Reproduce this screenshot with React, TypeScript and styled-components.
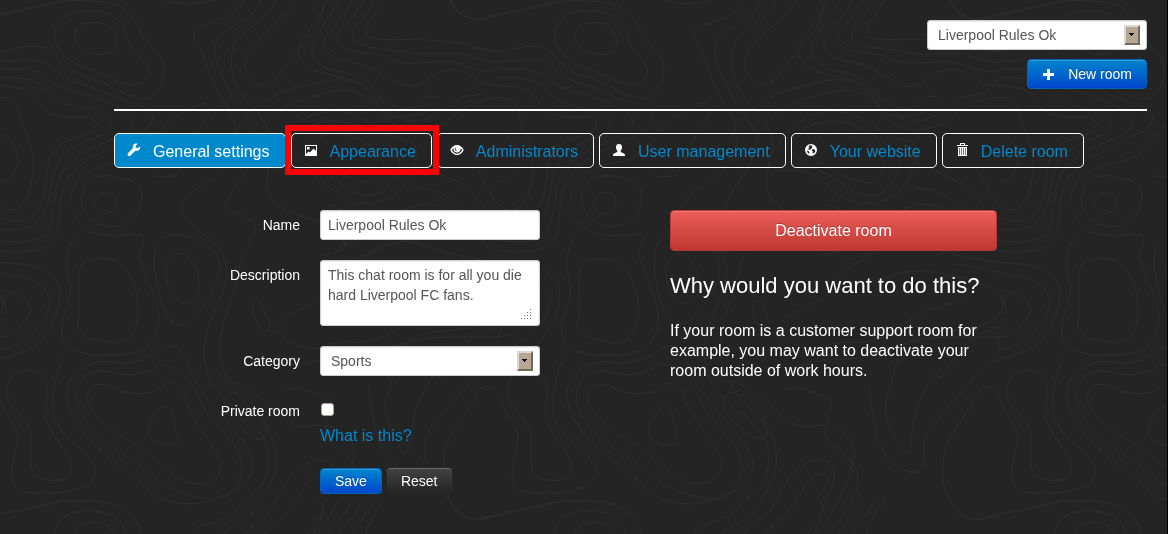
import React from "react";
import styled, { createGlobalStyle, css } from "styled-components";

const GlobalStyle = createGlobalStyle`
  *, *::before, *::after { box-sizing: border-box; }
  html { min-height: 100%; background: #242424; }
  body {
    margin: 0;
    color: #fff;
    font-family: "Liberation Sans", Arial, sans-serif;
    font-size: 16px;
    line-height: 20px;
  }
  button, input, select, textarea { font-family: inherit; }
`;

/* ---------- Topographic backdrop ---------- */

const Backdrop = styled.svg`
  position: fixed;
  inset: 0;
  z-index: -1;
  width: 100%;
  height: 100%;

  path { vector-effect: non-scaling-stroke; }
`;

const TILE_W = 1342;
const TILE_H = 1468;

const contours = [
  "M200 110C200 80 225 65 255 66C290 66 312 90 313 120C314 150 295 162 270 160C235 158 200 140 200 110Z",
  "M147 100C150 50 190 28 250 32C320 36 335 80 345 120C360 160 400 180 397 215C390 255 350 255 310 235C260 205 210 200 175 165C155 145 145 125 147 100Z",
  "M1210 0C1225 50 1270 70 1320 50C1380 30 1440 25 1500 5",
  "M265 5C340 10 370 60 380 100C400 140 440 160 440 200C440 250 420 285 390 290C350 290 310 260 270 240C220 220 190 215 165 185C140 150 120 135 90 135C50 135 30 150 0 150C-60 150 -80 120 -142 120",
  "M0 182C50 175 100 170 130 190C160 220 190 240 230 250C270 262 310 290 350 300C400 310 420 335 405 365C390 395 340 400 300 430C250 460 200 480 175 540C150 600 170 680 140 710C110 745 40 740 0 738",
  "M0 203C60 200 90 200 120 225C150 260 200 265 240 280C290 300 330 315 350 340C375 370 330 400 290 415C240 440 190 460 165 510C140 570 150 650 120 690C80 720 30 710 0 705",
  "M0 228C50 225 90 230 115 255C140 290 180 310 240 320C300 330 310 375 280 395C230 415 180 430 155 480C130 530 140 600 110 640C90 670 40 680 0 672",
  "M0 250C50 255 80 260 105 300C120 340 160 345 220 342C270 345 270 380 230 395C180 410 140 430 130 480C120 540 120 600 90 630C60 655 30 650 0 640",
  "M0 287C30 285 45 300 50 330C55 370 80 400 85 440C95 480 85 560 70 590C50 620 25 625 0 605C-30 570 -40 530 -60 500",
  "M0 392C30 400 45 430 48 460C50 500 30 530 0 535",
  "M252 595C252 575 265 564 283 565C300 566 312 578 311 596C310 615 300 628 280 627C263 625 252 612 252 595Z",
  "M218 580C222 540 250 515 290 515C330 522 375 530 380 560C385 610 360 660 310 665C260 668 215 630 218 580Z",
  "M190 600C180 540 240 490 300 480C350 475 400 440 420 400C440 360 500 320 545 303C575 310 560 350 535 380C510 420 500 480 470 515C440 520 420 520 412 515",
  "M200 630C210 680 280 700 340 690C400 680 390 710 370 740C380 790 420 870 425 920C430 990 400 1030 340 1040C270 1050 190 1040 170 1000C150 950 190 900 190 850C180 800 170 740 200 700",
  "M445 790C445 755 470 740 490 745C520 755 535 800 535 840C530 880 500 900 480 885C455 870 445 830 445 790Z",
  "M415 740C420 700 450 685 490 692C540 705 590 730 590 790C585 850 550 890 530 920C500 960 470 965 450 930C425 880 410 800 415 740Z",
  "M215 790C220 755 270 755 310 765C350 790 370 850 370 900C375 960 350 1005 310 1008C260 1000 205 990 208 950C220 900 205 840 215 790Z",
  "M650 5C640 40 600 55 545 75C500 95 530 120 545 160C560 210 575 260 600 300C635 350 640 400 630 450C610 510 540 540 500 580C470 620 500 650 550 690C600 730 620 780 600 850C580 910 540 980 550 1060C560 1160 640 1200 690 1260C740 1310 720 1400 700 1430C680 1450 665 1460 650 1473",
  "M700 5C680 50 640 65 600 95C560 130 580 190 600 230C620 290 670 350 690 400C690 470 640 530 610 590C590 620 640 620 680 650C700 690 650 730 640 800C630 870 590 940 590 1020C590 1110 640 1170 700 1230C750 1290 750 1370 730 1410C720 1440 710 1455 700 1473",
  "M740 5C720 50 680 70 640 110C610 150 620 220 640 260C670 310 740 370 730 440C720 490 700 560 740 600C790 640 880 640 920 700C940 740 900 740 860 750",
  "M790 10C760 60 720 80 680 130C650 170 650 210 680 240C720 270 740 230 770 190C790 150 850 100 860 60C870 30 870 10 850 -5",
  "M445 0C490 20 540 10 570 0",
  "M910 0C880 60 850 90 840 130C830 170 850 190 890 205C950 215 980 230 1010 270C1040 310 1090 330 1110 310C1140 290 1150 270 1180 290",
  "M875 0C860 70 800 110 800 160C820 210 880 220 930 230C980 240 1000 290 1030 330C1080 360 1130 330 1170 320",
  "M945 0C920 60 880 90 870 120C865 150 890 170 930 180C1000 190 1040 230 1080 250C1130 270 1160 200 1220 205C1270 210 1290 260 1342 250",
  "M975 0C950 60 900 90 905 120C925 160 980 150 1040 165C1080 200 1140 180 1200 180C1250 185 1300 225 1342 203",
  "M1005 0C980 60 930 90 950 120C990 150 1050 140 1100 155C1150 165 1200 150 1250 160C1290 175 1310 185 1342 182",
  "M1030 0C1000 60 970 90 990 110C1040 125 1090 110 1150 118C1220 120 1250 130 1290 145C1310 150 1330 150 1342 150",
  "M640 370C680 300 760 260 830 250C890 225 960 230 990 260C1040 310 1060 360 1120 355C1190 350 1210 280 1270 280C1310 280 1320 240 1342 228",
  "M700 380C740 320 810 290 870 275C950 245 1000 285 1030 340C1080 390 1130 390 1190 365C1230 320 1270 300 1310 290C1320 288 1330 287 1342 287",
  "M720 480C750 390 810 330 900 325C980 330 1010 390 1080 410C1140 420 1120 470 1090 540C1060 590 990 610 940 590C890 570 870 520 810 500C770 500 740 510 720 480Z",
  "M780 440C790 380 850 350 910 355C980 365 1010 410 1050 430C1090 460 1070 520 1030 560C990 590 950 570 920 540C880 500 800 490 780 440Z",
  "M830 430C850 390 900 385 940 400C980 410 1020 440 1030 480C1030 520 1000 550 960 530C910 510 830 480 830 430Z",
  "M680 890C690 875 705 890 708 910C715 930 730 950 722 968C710 980 695 960 688 940C680 925 675 905 680 890Z",
  "M400 1250C405 1220 430 1190 450 1193C470 1215 465 1260 480 1295C470 1315 420 1310 405 1285C397 1275 397 1262 400 1250Z",
  "M235 1170C235 1130 270 1120 300 1135C350 1165 400 1165 440 1130C480 1110 490 1140 500 1180C520 1240 570 1300 595 1350C600 1400 560 1425 520 1420C450 1400 430 1350 370 1310C310 1270 235 1220 235 1170Z",
  "M205 1160C205 1100 250 1080 310 1095C360 1110 400 1090 430 1070C480 1070 520 1130 540 1180C570 1250 640 1290 650 1370C650 1420 620 1460 560 1465C480 1455 430 1420 380 1370C320 1320 205 1260 205 1160Z",
  "M445 1468C410 1455 380 1420 360 1400C300 1350 180 1260 180 1160C180 1090 240 1050 310 1065C360 1070 400 1050 440 1020C480 1000 500 1050 520 1110C560 1200 660 1270 680 1360C680 1410 620 1460 570 1468",
  "M30 1110C50 1080 90 1080 120 1110C140 1150 110 1200 130 1250C160 1310 200 1340 190 1390C170 1420 110 1415 90 1390C70 1340 100 1290 70 1240C30 1190 0 1160 30 1110Z",
  "M0 770C60 775 150 780 160 850C160 910 140 970 100 1010C60 1040 30 1045 0 1055",
  "M0 800C60 810 120 820 135 880C130 940 90 980 50 1005C30 1020 10 1025 0 1030",
  "M0 850C50 860 85 880 80 920C60 960 30 985 0 990",
  "M0 870C20 890 20 910 0 920",
  "M0 1170C10 1220 60 1250 45 1310C30 1370 20 1440 70 1445C140 1450 230 1450 255 1400C270 1340 180 1300 150 1240C130 1190 150 1100 170 1050",
  "M0 1508C60 1500 110 1480 170 1471C200 1468 230 1470 265 1473",
  "M640 1215C650 1205 662 1215 666 1230C660 1245 645 1235 640 1215Z",
  "M603 1170C610 1140 650 1150 680 1190C710 1220 730 1270 705 1290C670 1290 640 1250 620 1230C605 1210 600 1190 603 1170Z",
  "M580 1130C600 1100 660 1130 700 1170C750 1200 780 1270 840 1250C900 1240 960 1280 950 1340C945 1390 925 1430 910 1468",
  "M765 1150C790 1120 850 1160 890 1170C890 1220 860 1250 880 1290C910 1330 960 1350 960 1400C965 1430 955 1450 945 1468",
  "M790 1478C810 1440 830 1400 860 1390C895 1390 880 1435 850 1463",
  "M740 1473C760 1420 790 1370 850 1350C920 1350 900 1420 875 1468",
  "M745 960C780 900 870 900 900 830C920 780 1000 760 1020 720",
  "M900 750C910 710 960 700 1010 690C1060 680 1080 630 1150 620C1220 620 1250 680 1300 710C1320 730 1330 735 1342 738",
  "M930 760C990 760 1020 720 1070 710C1120 700 1170 740 1230 750C1270 760 1310 765 1342 770",
  "M1015 830C1100 770 1220 800 1330 850C1375 890 1340 950 1270 960C1200 980 1160 960 1100 1000C1060 1040 1060 1100 1040 1160C1020 1220 1060 1290 1085 1330C1115 1320 1100 1240 1120 1190C1150 1120 1170 1080 1180 1110",
  "M1342 1055C1290 1070 1285 1100 1230 1160C1190 1220 1130 1260 1140 1330C1140 1390 1110 1400 1070 1370C1000 1330 1000 1200 990 1130",
  "M1342 1030C1320 950 1380 950 1310 970C1240 1000 1220 1060 1180 1110",
  "M1225 775C1270 785 1310 790 1342 800",
  "M745 970C760 1000 830 1040 880 1015C930 990 960 1020 1030 990C1090 960 1120 910 1180 900C1220 890 1240 880 1250 850",
  "M800 1080C840 1050 900 1060 960 1050C1020 1040 1090 990 1200 990C1270 990 1310 990 1342 990",
  "M1342 1170C1310 1110 1290 1130 1270 1180C1240 1240 1190 1290 1190 1360C1180 1450 1220 1515 1280 1525C1300 1520 1320 1515 1342 1508",
  "M1140 480C1180 520 1250 530 1280 580C1300 620 1320 635 1342 640",
  "M1110 560C1140 540 1200 570 1240 610C1280 660 1310 665 1342 672",
  "M880 600C930 620 970 650 1030 640C1080 620 1130 580 1190 610C1240 640 1290 695 1342 705",
];

const Topography = () => (
  <Backdrop aria-hidden="true">
    <defs>
      <g id="contours" fill="none" stroke="#2c2c2c" strokeWidth="1">
        {contours.map((d) => (
          <path key={d} d={d} />
        ))}
      </g>
      <pattern id="topo" width="500" height="500" patternUnits="userSpaceOnUse">
        <rect width="500" height="500" fill="#242424" />
        <g transform="scale(0.3725 0.3406)">
          <use href="#contours" />
          <use href="#contours" x={-TILE_W} />
          <use href="#contours" x={TILE_W} />
          <use href="#contours" y={-TILE_H} />
          <use href="#contours" x={-TILE_W} y={-TILE_H} />
        </g>
      </pattern>
    </defs>
    <rect width="100%" height="100%" fill="url(#topo)" />
  </Backdrop>
);

/* ---------- Icons ---------- */

const Glyph = styled.svg`
  flex: none;
  width: 14px;
  height: 14px;
  fill: #fff;
`;

const WrenchIcon = () => (
  <Glyph viewBox="0 0 14 14">
    <path d="M13 3.2 10.8 5.2 9 4.6 8.6 3 10.7.7C9.2.1 7.4.5 6.5 1.7 5.7 2.7 5.6 3.8 6 5L1.2 9.9C.4 10.7.4 11.8 1 12.5c.7.7 1.8.7 2.6-.1L8.3 7.7c1.4.4 2.9.1 3.9-1C13 5.8 13.400 4.5 13 3.2Z" />
  </Glyph>
);

const PictureIcon = () => (
  <Glyph viewBox="0 0 14 14">
    <path
      fillRule="evenodd"
      d="M1 2H13V13H1ZM2 3V11L4.500 8.500 6 9.500 9.500 5.500 12 8V3Z"
    />
    <path d="M3 4H5.500V6.500H3Z" />
  </Glyph>
);

const EyeIcon = () => (
  <Glyph viewBox="0 0 14 14">
    <path
      fillRule="evenodd"
      d="M7 2C10.300 2 13 4.700 13.600 7 13 9.300 10.300 12 7 12S1 9.300.4 7C1 4.700 3.700 2 7 2ZM3.400 5C2.800 5.600 2.300 6.300 2 7 2.800 9 4.700 10.700 7 10.700S11.200 9 12 7C11.700 6.300 11.200 5.600 10.600 5 11 7.500 9.300 9.500 7 9.500S3 7.500 3.400 5ZM5.200 4.500C4.700 5.200 4.600 6 4.900 6.800 5.500 8 6.500 8.300 7.500 8.200 6.300 7.800 5.600 6.900 5.600 5.800 5.600 5.300 5.500 4.900 5.200 4.500Z"
    />
  </Glyph>
);

const UserIcon = () => (
  <Glyph viewBox="0 0 14 14">
    <path d="M7 1C9 1 10 2.200 10 4.200 10 5.600 9.500 6.800 8.700 7.600V9L12 10.600C12.700 11 13 11.400 13 12V13H1V12C1 11.400 1.300 11 2 10.600L5.300 9V7.600C4.500 6.800 4 5.600 4 4.200 4 2.200 5 1 7 1Z" />
  </Glyph>
);

const GlobeIcon = () => (
  <Glyph viewBox="0 0 14 14">
    <path
      fillRule="evenodd"
      d="M7 1A6 6 0 1 1 7 13 6 6 0 0 1 7 1ZM7.500 2.300 5 2.700 4.500 4 5.500 4.500 4 6 5.500 7 7 6 8.500 4.500 7.500 3.800 8.500 3.200ZM9 6 7.500 7.500 9 8.500 8.500 10.500 10 10.200 11.300 8.500 10.800 6.500ZM3 7.500 3.500 9.500 5 10.800 5.500 9.500 4.500 8Z"
    />
  </Glyph>
);

const TrashIcon = () => (
  <Glyph viewBox="0 0 14 14">
    <path
      fillRule="evenodd"
      d="M5 0H10V2H13V3H2V2H5ZM6 1V2H9V1ZM3 4H12V13H3ZM4 5V12H5V5ZM6 5V12H7V5ZM8 5V12H9V5ZM10 5V12H11V5Z"
    />
    <path d="M4 5H11V12H4Z" fillOpacity="0.4" />
  </Glyph>
);

const PlusIcon = () => (
  <Glyph viewBox="0 0 14 14">
    <path d="M5 2H8V6H12V9H8V13H5V9H1V6H5Z" />
  </Glyph>
);

/* ---------- Layout ---------- */

const Page = styled.div`
  min-height: 100vh;
  padding: 20px 20px 20px 114px;
  border-right: 1px solid #000;
`;

const Header = styled.header`
  display: flex;
  flex-direction: column;
  align-items: flex-end;
  gap: 9px;
  padding-bottom: 20px;
  border-bottom: 2px solid #fff;
`;

const Tabs = styled.nav`
  display: flex;
  flex-wrap: wrap;
  gap: 5px;
  margin-top: 22px;
`;

const Tab = styled.a<{ $active?: boolean; $marked?: boolean }>`
  position: relative;
  display: flex;
  gap: 12px;
  height: 35px;
  padding: 9px 15px 0 12px;
  border: 1px solid #fff;
  border-radius: 5px;
  background: ${(p) => (p.$active ? "#08c" : "transparent")};
  color: ${(p) => (p.$active ? "#fff" : "#08c")};
  line-height: 18px;
  text-decoration: none;
  white-space: nowrap;

  ${(p) =>
    p.$marked &&
    css`
      &::after {
        content: "";
        position: absolute;
        z-index: 1;
        inset: -9px -8px -8px -7px;
        border: 6px solid #f00;
      }
    `}
`;

const Columns = styled.main`
  display: flex;
  flex-wrap: wrap;
  align-items: flex-start;
  gap: 42px 130px;
  margin-top: 42px;
`;

const Form = styled.form`
  display: flex;
  flex-direction: column;
  gap: 20px;
`;

const Row = styled.div`
  display: grid;
  grid-template-columns: 186px 220px;
  column-gap: 20px;
  align-items: start;
`;

const Label = styled.label`
  padding-top: 5px;
  font-size: 14px;
  text-align: right;
`;

const Field = styled.div`
  position: relative;
`;

const fieldStyle = css`
  display: block;
  width: 220px;
  margin: 0;
  border: 1px solid #ccc;
  border-radius: 3px;
  outline: 0;
  background: #fff;
  box-shadow: inset 0 1px 1px rgba(0, 0, 0, 0.075);
  color: #555;
  font-size: 14px;
  line-height: 20px;
`;

const TextInput = styled.input`
  ${fieldStyle}
  height: 30px;
  padding: 4px 7px;
`;

const TextArea = styled.textarea`
  ${fieldStyle}
  height: 66px;
  padding: 4px 7px;
  overflow: hidden;
  resize: none;
`;

const Grip = styled.svg`
  position: absolute;
  right: 8px;
  bottom: 6px;
  width: 12px;
  height: 12px;
  fill: #777;
  pointer-events: none;
`;

const Dropdown = styled.select`
  ${fieldStyle}
  appearance: none;
  height: 30px;
  padding: 4px 26px 4px 10px;
`;

const DropArrow = styled.span`
  position: absolute;
  top: 5px;
  right: 7px;
  display: grid;
  place-items: center;
  width: 16px;
  height: 20px;
  border: 2px solid;
  border-color: #dcd7cf #74685a #74685a #dcd7cf;
  background: #b5a793;
  pointer-events: none;
`;

const CheckBox = styled.input`
  appearance: none;
  display: block;
  width: 13px;
  height: 13px;
  margin: 7px 1px 10px;
  border: 1px solid #a79f94;
  border-radius: 3px;
  background: #fff;
`;

const Link = styled.a`
  color: #08c;
  text-decoration: none;
`;

const Actions = styled.div`
  display: flex;
  align-items: center;
  gap: 4px;
  padding: 1px 0 0 206px;
`;

const tones = {
  blue: ["#08c", "#04c", "#06b"],
  red: ["#ee5f5b", "#bd362f", "#b53a35"],
  dark: ["#444", "#222", "#292929"],
};

const heights = { small: 26, compact: 28, medium: 30, large: 41 };

const Button = styled.button<{ $tone: keyof typeof tones; $size?: keyof typeof heights }>`
  display: flex;
  align-items: center;
  justify-content: center;
  gap: 12px;
  height: ${(p) => heights[p.$size ?? "medium"]}px;
  padding: 0 14px;
  border: 1px solid ${(p) => tones[p.$tone][2]};
  border-radius: 4px;
  background: linear-gradient(${(p) => tones[p.$tone][0]}, ${(p) => tones[p.$tone][1]}) border-box;
  box-shadow: inset 0 1px 0 rgba(255, 255, 255, 0.2);
  color: #fff;
  font-size: ${(p) => (p.$size === "large" ? 16 : 14)}px;
  line-height: 20px;
  text-shadow: 0 -1px 0 rgba(0, 0, 0, 0.25);
`;

const Aside = styled.aside`
  display: flex;
  flex-direction: column;
  flex: 0 1 327px;
`;

const Question = styled.h2`
  margin: 24px 0;
  font-size: 22px;
  font-weight: 400;
  line-height: 22px;
`;

const Copy = styled.p`
  margin: 0;
`;

const SelectArrow = () => (
  <DropArrow>
    <svg width="6" height="4" viewBox="0 0 6 4" aria-hidden="true">
      <path d="M0 0H5V1H4V2H3V3H2V2H1V1H0Z" />
    </svg>
  </DropArrow>
);

export default function App() {
  return (
    <>
      <GlobalStyle />
      <Topography />
      <Page>
        <Header>
          <Field>
            <Dropdown aria-label="Room" defaultValue="Liverpool Rules Ok">
              <option>Liverpool Rules Ok</option>
            </Dropdown>
            <SelectArrow />
          </Field>
          <Button type="button" $tone="blue">
            <PlusIcon />
            New room
          </Button>
        </Header>

        <Tabs>
          <Tab href="#general" $active>
            <WrenchIcon />
            General settings
          </Tab>
          <Tab href="#appearance" $marked>
            <PictureIcon />
            Appearance
          </Tab>
          <Tab href="#administrators">
            <EyeIcon />
            Administrators
          </Tab>
          <Tab href="#users">
            <UserIcon />
            User management
          </Tab>
          <Tab href="#website">
            <GlobeIcon />
            Your website
          </Tab>
          <Tab href="#delete">
            <TrashIcon />
            Delete room
          </Tab>
        </Tabs>

        <Columns>
          <Form>
            <Row>
              <Label htmlFor="name">Name</Label>
              <TextInput id="name" type="text" defaultValue="Liverpool Rules Ok" />
            </Row>
            <Row>
              <Label htmlFor="description">Description</Label>
              <Field>
                <TextArea
                  id="description"
                  defaultValue="This chat room is for all you die hard Liverpool FC fans."
                />
                <Grip viewBox="0 0 12 12" aria-hidden="true">
                  <path d="M10 1h1v1h-1zM7 4h1v1h-1zM10 4h1v1h-1zM4 7h1v1h-1zM7 7h1v1h-1zM10 7h1v1h-1zM1 10h1v1h-1zM4 10h1v1h-1zM7 10h1v1h-1zM10 10h1v1h-1z" />
                </Grip>
              </Field>
            </Row>
            <Row>
              <Label htmlFor="category">Category</Label>
              <Field>
                <Dropdown id="category" defaultValue="Sports">
                  <option>Sports</option>
                </Dropdown>
                <SelectArrow />
              </Field>
            </Row>
            <Row>
              <Label htmlFor="private">Private room</Label>
              <Field>
                <CheckBox id="private" type="checkbox" />
                <Link href="#private-help">What is this?</Link>
              </Field>
            </Row>
            <Actions>
              <Button type="submit" $tone="blue" $size="small">
                Save
              </Button>
              <Button type="reset" $tone="dark" $size="compact">
                Reset
              </Button>
            </Actions>
          </Form>

          <Aside>
            <Button type="button" $tone="red" $size="large">
              Deactivate room
            </Button>
            <Question>Why would you want to do this?</Question>
            <Copy>
              If your room is a customer support room for example, you may want to deactivate your
              room outside of work hours.
            </Copy>
          </Aside>
        </Columns>
      </Page>
    </>
  );
}
